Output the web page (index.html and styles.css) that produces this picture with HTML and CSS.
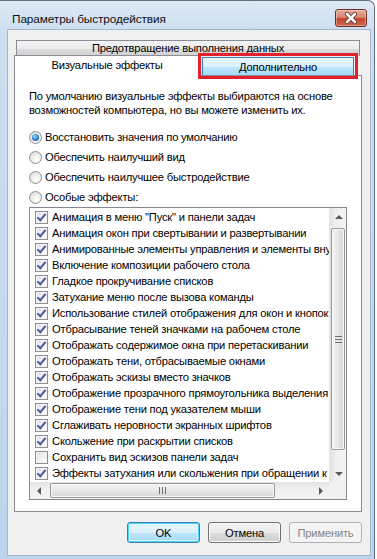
FILE: index.html
```html
<!DOCTYPE html>
<html>
<head>
<meta charset="utf-8">
<meta name="viewport" content="width=device-width, initial-scale=1.0"/>
<link rel="stylesheet" href="styles.css">
</head>
<body>
<div class="window">

  <!-- Title bar -->
  <div class="titlebar">
    <span class="title">Параметры быстродействия</span>
    <div class="close">
      <svg width="32" height="18" viewBox="0 0 32 18">
        <path d="M12 5 L20 13 M20 5 L12 13" stroke="#5a2a22" stroke-width="4.2" stroke-linecap="round"/>
        <path d="M12 5 L20 13 M20 5 L12 13" stroke="#fff" stroke-width="2.6" stroke-linecap="round"/>
      </svg>
    </div>
  </div>

  <div class="client">

    <!-- Tabs -->
    <div class="tabs">
      <div class="tab-row back">
        <div class="tab">Предотвращение выполнения данных</div>
      </div>
      <div class="tab-row front">
        <div class="tab selected">Визуальные эффекты</div>
        <div class="tab hover">Дополнительно<span class="mark"></span></div>
      </div>
    </div>

    <div class="panel">
      <p class="intro">По умолчанию визуальные эффекты выбираются на основе<br>возможностей компьютера, но вы можете изменить их.</p>

      <div class="radios">
        <div class="radio-row"><span class="radio on"></span>Восстановить значения по умолчанию</div>
        <div class="radio-row"><span class="radio"></span>Обеспечить наилучший вид</div>
        <div class="radio-row"><span class="radio"></span>Обеспечить наилучшее быстродействие</div>
        <div class="radio-row"><span class="radio"></span>Особые эффекты:</div>
      </div>

      <div class="listbox">
        <div class="list-main">
          <div class="items">
            <div class="item"><span class="check on"></span>Анимация в меню "Пуск" и панели задач</div>
            <div class="item"><span class="check on"></span>Анимация окон при свертывании и развертывании</div>
            <div class="item"><span class="check on"></span>Анимированные элементы управления и элементы внутри окна</div>
            <div class="item"><span class="check on"></span>Включение композиции рабочего стола</div>
            <div class="item"><span class="check on"></span>Гладкое прокручивание списков</div>
            <div class="item"><span class="check on"></span>Затухание меню после вызова команды</div>
            <div class="item"><span class="check on"></span>Использование стилей отображения для окон и кнопок</div>
            <div class="item"><span class="check on"></span>Отбрасывание теней значками на рабочем столе</div>
            <div class="item"><span class="check on"></span>Отображать содержимое окна при перетаскивании</div>
            <div class="item"><span class="check on"></span>Отображать тени, отбрасываемые окнами</div>
            <div class="item"><span class="check on"></span>Отображать эскизы вместо значков</div>
            <div class="item"><span class="check on"></span>Отображение прозрачного прямоугольника выделения</div>
            <div class="item"><span class="check on"></span>Отображение тени под указателем мыши</div>
            <div class="item"><span class="check on"></span>Сглаживать неровности экранных шрифтов</div>
            <div class="item"><span class="check on"></span>Скольжение при раскрытии списков</div>
            <div class="item"><span class="check"></span>Сохранить вид эскизов панели задач</div>
            <div class="item"><span class="check on"></span>Эффекты затухания или скольжения при обращении к меню</div>
          </div>
          <div class="vscroll">
            <div class="arrow"><span class="tri up"></span></div>
            <div class="track">
              <div class="thumb"><span class="grip"></span></div>
            </div>
            <div class="arrow"><span class="tri down"></span></div>
          </div>
        </div>
        <div class="hscroll-row">
          <div class="hscroll">
            <div class="arrow"><span class="tri left"></span></div>
            <div class="track">
              <div class="thumb"><span class="grip"></span></div>
            </div>
            <div class="arrow"><span class="tri right"></span></div>
          </div>
          <div class="corner"></div>
        </div>
      </div>
    </div>

    <!-- Dialog buttons -->
    <div class="buttons">
      <button class="default">OK</button>
      <button>Отмена</button>
      <button disabled>Применить</button>
    </div>

  </div>
</div>
</body>
</html>
```

FILE: styles.css
```css
body {
  margin: 0;
  background: #fff;
  font-family: "Liberation Sans", Arial, sans-serif;
  font-size: 11.2px;
  letter-spacing: -0.2px;
  color: #000;
}

.window {
  width: 375px;
  height: 559px;
  box-sizing: border-box;
  border-top: 1px solid #5d6d80;
  border-right: 1px solid #5d6d80;
  border-top-right-radius: 7px;
  background: linear-gradient(to bottom, #dde8f4 0, #cddff1 30px, #bcd5ee 100%);
  display: flex;
  flex-direction: column;
}

/* title bar */
.titlebar {
  height: 29px;
  display: flex;
  justify-content: space-between;
  align-items: flex-start;
  padding: 0 7px 0 12px;
  flex-shrink: 0;
}

.title {
  margin-top: 10px;
  line-height: 16px;
  font-size: 11.8px;
  letter-spacing: -0.1px;
  color: #101010;
}

.close {
  margin-top: 8px;
  width: 32px;
  height: 18px;
  box-sizing: border-box;
  border: 1px solid #6d2b22;
  border-radius: 3px;
  background: linear-gradient(to bottom, #e9a99a 0, #d98770 45%, #c4452c 55%, #d0684e 100%);
  box-shadow: inset 0 0 0 1px rgba(255,255,255,0.35);
  overflow: hidden;
}

.close svg {
  display: block;
  margin: -1px;
}

/* client area */
.client {
  margin: 0 4px 0 8px;
  height: 525px;
  background: #f0f0f0;
  box-shadow: 0 0 0 1px #a3b6cc;
  padding: 10px 8px 0 6px;
  box-sizing: border-box;
}

/* tabs */
.tabs {
  height: 35px;
  position: relative;
  z-index: 1;
}

.tab-row {
  display: flex;
}

.tab {
  box-sizing: border-box;
  border: 1px solid #898c95;
  border-bottom: none;
  background: linear-gradient(to bottom, #f3f3f3 0, #ebebeb 50%, #dddddd 51%, #cfcfcf 100%);
  text-align: center;
  white-space: nowrap;
}

.back {
  padding: 0 2px;
}

.back .tab {
  width: 344px;
  height: 16px;
  line-height: 15px;
}

.front {
  margin-top: -1px;
  height: 20px;
  align-items: flex-end;
}

.tab.selected {
  width: 186px;
  height: 21px;
  margin-bottom: -1px;
  background: #fff;
  line-height: 18px;
  position: relative;
}

.tab.hover {
  width: 152px;
  height: 18px;
  margin-left: 2px;
  line-height: 18px;
  background: linear-gradient(to bottom, #eaf6fd 0, #d9f0fc 50%, #bee6fd 51%, #a7d9f5 100%);
  border-color: #3c7fb1;
  position: relative;
}

/* red annotation frame */
.mark {
  position: absolute;
  left: -5px;
  right: -5px;
  top: -5px;
  bottom: -4px;
  border: 3px solid #e3202b;
}

/* tab page */
.panel {
  height: 437px;
  box-sizing: border-box;
  border: 1px solid #898c95;
  background: #fff;
  padding: 12px 14px 0;
}

.intro {
  margin: 0;
  line-height: 14px;
  white-space: nowrap;
  padding-top: 1px;
}

.radios {
  margin-top: 10px;
}

.radio-row {
  height: 20px;
  display: flex;
  align-items: center;
}

.radio {
  width: 13px;
  height: 13px;
  box-sizing: border-box;
  border-radius: 50%;
  border: 1px solid #8e8f8f;
  background: radial-gradient(circle at 60% 65%, #ffffff 0, #f1f1f1 40%, #d2d2d2 100%);
  margin-right: 3px;
  position: relative;
}

.radio.on::after {
  content: "";
  position: absolute;
  left: 2px;
  top: 2px;
  width: 7px;
  height: 7px;
  border-radius: 50%;
  background: radial-gradient(circle at 40% 35%, #a9dcff 0, #3a8fd8 45%, #14478a 100%);
}

/* list with checkboxes */
.listbox {
  height: 293px;
  box-sizing: border-box;
  border: 1px solid #828790;
  display: flex;
  flex-direction: column;
}

.list-main {
  height: 274px;
  display: flex;
}

.items {
  flex: 1;
  overflow: hidden;
  padding-top: 1px;
  white-space: nowrap;
}

.item {
  height: 16px;
  display: flex;
  align-items: center;
  padding-left: 5px;
}

.check {
  flex-shrink: 0;
  width: 13px;
  height: 13px;
  box-sizing: border-box;
  border: 1px solid #8e8f8f;
  background: linear-gradient(135deg, #dcdcdc 0, #f4f4f4 60%, #ffffff 100%);
  box-shadow: inset 0 0 0 1px #f4f4f4;
  margin-right: 4px;
  position: relative;
}

.check.on::after {
  content: "";
  position: absolute;
  left: 3px;
  top: 0px;
  width: 3px;
  height: 7px;
  border-right: 2px solid #4a5d99;
  border-bottom: 2px solid #4a5d99;
  transform: rotate(40deg);
}

/* scrollbars */
.vscroll {
  width: 17px;
  display: flex;
  flex-direction: column;
  background: linear-gradient(to right, #e2e2e2 0, #eeeeee 30%, #f4f4f4 100%);
  border-left: 1px solid #e6e6e6;
  box-sizing: border-box;
}

.arrow {
  width: 17px;
  height: 17px;
  flex-shrink: 0;
  display: flex;
  align-items: center;
  justify-content: center;
}

.vscroll .track {
  flex: 1;
  padding: 3px 1px 0;
}

.vscroll .thumb {
  height: 220px;
  border: 1px solid #979797;
  border-radius: 2px;
  background: linear-gradient(to right, #f4f4f4 0, #e8e8e8 50%, #d6d6d6 100%);
  box-shadow: inset 0 0 0 1px #fafafa;
  display: flex;
  align-items: center;
  justify-content: center;
}

.vscroll .grip {
  width: 7px;
  height: 7px;
  background: repeating-linear-gradient(to bottom, #6e6e6e 0 1px, transparent 1px 3px);
}

.hscroll-row {
  height: 17px;
  display: flex;
}

.hscroll {
  flex: 1;
  display: flex;
  background: linear-gradient(to bottom, #e2e2e2 0, #eeeeee 30%, #f4f4f4 100%);
}

.hscroll .arrow {
  width: 17px;
}

.hscroll .track {
  flex: 1;
  padding: 1px 0 1px 3px;
}

.hscroll .thumb {
  width: 225px;
  height: 15px;
  box-sizing: border-box;
  border: 1px solid #979797;
  border-radius: 2px;
  background: linear-gradient(to bottom, #f4f4f4 0, #e8e8e8 50%, #d6d6d6 100%);
  box-shadow: inset 0 0 0 1px #fafafa;
  display: flex;
  align-items: center;
  justify-content: center;
}

.hscroll .grip {
  width: 7px;
  height: 7px;
  background: repeating-linear-gradient(to right, #6e6e6e 0 1px, transparent 1px 3px);
}

.corner {
  width: 17px;
  background: #f0f0f0;
}

.tri {
  width: 0;
  height: 0;
  border: 4px solid transparent;
}

.tri.up { border-bottom-color: #5a5a5a; border-top-width: 0; }
.tri.down { border-top-color: #5a5a5a; border-bottom-width: 0; }
.tri.left { border-right-color: #5a5a5a; border-left-width: 0; }
.tri.right { border-left-color: #5a5a5a; border-right-width: 0; }

/* buttons */
.buttons {
  display: flex;
  justify-content: flex-end;
  gap: 8px;
  margin-top: 10px;
}

button {
  width: 73px;
  height: 21px;
  padding: 0;
  font-family: inherit;
  font-size: 11.2px;
  letter-spacing: inherit;
  color: #000;
  border: 1px solid #707070;
  border-radius: 3px;
  background: linear-gradient(to bottom, #f2f2f2 0, #ebebeb 50%, #dddddd 51%, #cfcfcf 100%);
  box-shadow: inset 0 0 0 1px #fbfbfb;
}

button.default {
  border-color: #3c7fb1;
  box-shadow: inset 0 0 0 1px #48d7fb, inset 0 0 0 2px #e0f3fc;
  background: linear-gradient(to bottom, #eaf6fd 0, #d9f0fc 50%, #bee6fd 51%, #a7d9f5 100%);
}

button:disabled {
  color: #838383;
  border-color: #adb2b5;
  background: #f4f4f4;
  box-shadow: none;
}
```
